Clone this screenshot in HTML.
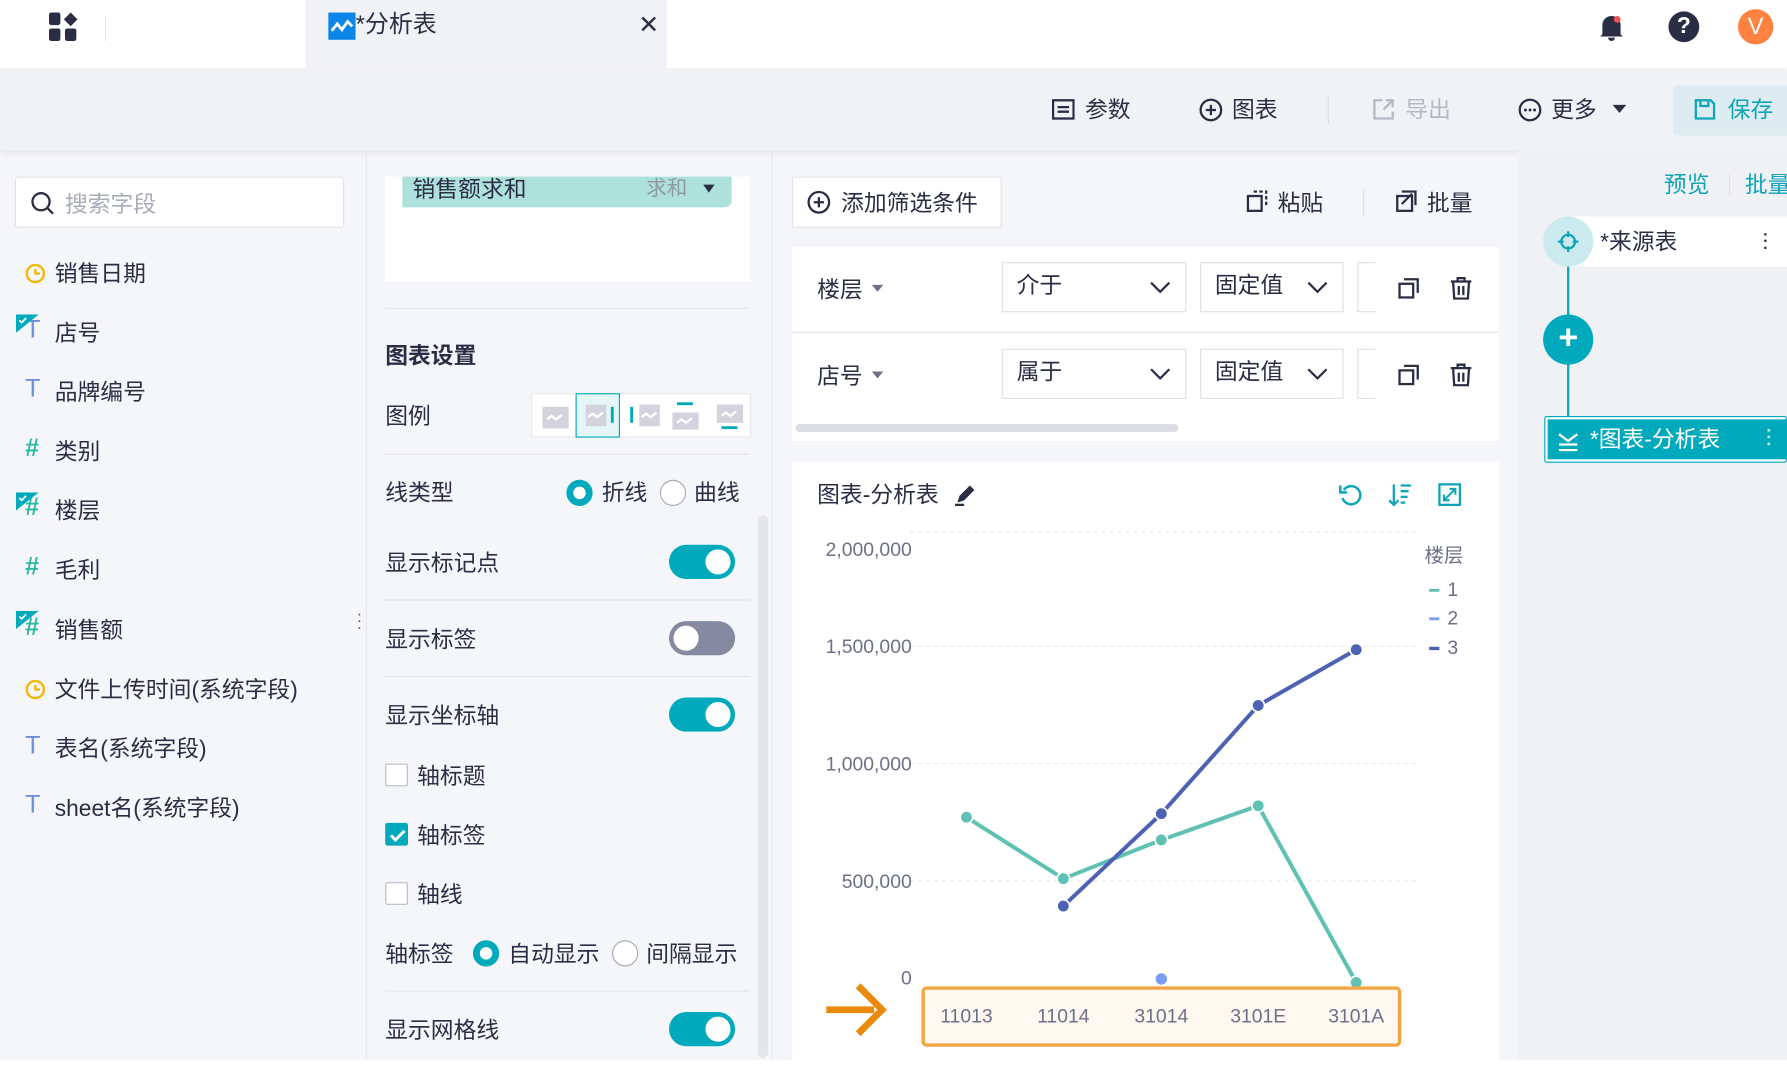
<!DOCTYPE html>
<html><head><meta charset="utf-8"><style>
html,body{margin:0;padding:0;width:1787px;height:1080px;overflow:hidden;background:#f3f4f7}
#w{position:absolute;left:0;top:0;width:1568px;height:948px;transform:scale(1.13967);transform-origin:0 0;font-family:"Liberation Sans","Noto Sans CJK SC",sans-serif;color:#2a2e45;background:#f5f6f9}
.a{position:absolute}
.t{font-size:20px;white-space:nowrap;margin-top:-3px}
.sw{position:absolute;width:58px;height:30px;border-radius:15px;background:#00a9bc}
.sw::after{content:"";position:absolute;right:4px;top:4px;width:22px;height:22px;border-radius:50%;background:#fff}
.sw.off{background:#858aa0}.sw.off::after{left:4px;right:auto}
.cb{position:absolute;width:18px;height:18px;border:1.5px solid #b8bccb;border-radius:2px;background:#fff}
.rd{position:absolute;width:20px;height:20px;border-radius:50%;border:1.5px solid #a5a9b8;background:#fff;box-sizing:border-box}
.rd.on{border:6px solid #00a9bc}
.hr{position:absolute;height:1px;background:#e2e4ea}
.sel{position:absolute;height:44px;background:#fff;border:1px solid #dfe1e7;box-sizing:border-box;font-size:20px;line-height:40px;padding-left:12px}
</style></head><body><div id="w">
<!-- top bar -->
<div class="a" style="left:0;top:0;width:1568px;height:60px;background:#fff"></div>
<svg class="a" style="left:43px;top:11px" width="26" height="26"><rect x="0" y="0" width="10" height="11" rx="2" fill="#2a2e45"/><path d="M19 0l6 6-6 6-6-6z" fill="#2a2e45"/><rect x="0" y="14" width="10" height="11" rx="2" fill="#2a2e45"/><rect x="14" y="14" width="10" height="11" rx="2" fill="#2a2e45"/></svg>
<div class="a" style="left:92px;top:14px;width:1px;height:22px;background:#e3e5ea"></div>
<div class="a" style="left:268px;top:0;width:317px;height:60px;background:#f1f2f6"></div>
<svg class="a" style="left:288px;top:11px" width="24" height="24"><rect width="24" height="24" fill="#0a86e8"/><path d="M3 16l5-6 4 5 5-7 4 4" stroke="#fff" stroke-width="2.5" fill="none"/></svg>
<div class="a t" style="left:312px;top:8px;font-size:21px">*分析表</div>
<div class="a t" style="left:560px;top:12px;font-size:22px">✕</div>
<svg class="a" style="left:1401px;top:11px" width="26" height="26"><path d="M5 19V11a8 8 0 0116 0v8l2 2H3z M10 22h6a3 3 0 01-6 0" fill="#2a2e45"/><circle cx="18" cy="6" r="3" fill="#f05050"/></svg>
<div class="a" style="left:1464px;top:10px;width:27px;height:27px;border-radius:50%;background:#2a2e45;color:#fff;font-weight:bold;text-align:center;line-height:27px;font-size:20px">?</div>
<div class="a" style="left:1525px;top:8px;width:31px;height:31px;border-radius:50%;background:#ff8240;color:#fff;text-align:center;line-height:31px;font-size:21px">V</div>
<!-- toolbar -->
<div class="a" style="left:0;top:60px;width:1568px;height:72px;background:#f1f2f5;box-shadow:0 3px 6px rgba(0,0,0,.06)"></div>
<svg class="a" style="left:923px;top:86px" width="20" height="20"><rect x="1" y="2" width="18" height="16" fill="none" stroke="#2a2e45" stroke-width="2"/><path d="M5 8h10M5 12h10" stroke="#2a2e45" stroke-width="2"/></svg>
<div class="a t" style="left:952px;top:83px">参数</div>
<svg class="a" style="left:1052px;top:86px" width="21" height="21"><circle cx="10.5" cy="10.5" r="9" fill="none" stroke="#2a2e45" stroke-width="2"/><path d="M10.5 6v9M6 10.5h9" stroke="#2a2e45" stroke-width="2"/></svg>
<div class="a t" style="left:1081px;top:83px">图表</div>
<div class="a" style="left:1165px;top:84px;width:1px;height:24px;background:#dcdee4"></div>
<svg class="a" style="left:1204px;top:86px" width="20" height="20"><path d="M9 2H2v16h16v-6M10 10l8-8M12 2h6v6" stroke="#b5b9c6" stroke-width="2" fill="none"/></svg>
<div class="a t" style="left:1233px;top:83px;color:#b5b9c6">导出</div>
<svg class="a" style="left:1332px;top:86px" width="21" height="21"><circle cx="10.5" cy="10.5" r="9" fill="none" stroke="#2a2e45" stroke-width="2"/><circle cx="6.5" cy="10.5" r="1.3" fill="#2a2e45"/><circle cx="10.5" cy="10.5" r="1.3" fill="#2a2e45"/><circle cx="14.5" cy="10.5" r="1.3" fill="#2a2e45"/></svg>
<div class="a t" style="left:1361px;top:83px">更多</div>
<div class="a" style="left:1415px;top:92px;border:6px solid transparent;border-top:7px solid #2a2e45"></div>
<div class="a" style="left:1468px;top:75px;width:110px;height:44px;background:#dcecf1;border-radius:4px"></div>
<svg class="a" style="left:1486px;top:86px" width="20" height="20"><path d="M2 2h13l3 3v13H2z M6 2v5h7V2" stroke="#0fa5b9" stroke-width="2" fill="none"/></svg>
<div class="a t" style="left:1516px;top:83px;color:#0fa5b9">保存</div>
<!-- left panel -->
<div class="a" style="left:13px;top:155px;width:289px;height:45px;background:#fff;border:1px solid #e0e2e8;border-radius:3px;box-sizing:border-box"></div>
<svg class="a" style="left:27px;top:168px" width="21" height="21"><circle cx="9" cy="9" r="7.5" fill="none" stroke="#2a2e45" stroke-width="2"/><path d="M14.5 14.5l5 5" stroke="#2a2e45" stroke-width="2"/></svg>
<div class="a t" style="left:57px;top:166px;color:#a8acba">搜索字段</div>
<div class="a" style="left:321px;top:132px;width:1px;height:816px;background:#e5e7ec"></div>
<svg class="a" style="left:22px;top:231px" width="18" height="18"><circle cx="9" cy="9" r="7.5" fill="none" stroke="#f7b500" stroke-width="2"/><path d="M9 5v4h4" stroke="#f7b500" stroke-width="2" fill="none"/></svg>
<div class="a t" style="left:48px;top:227px">销售日期</div>
<div class="a t" style="left:22px;top:279px;color:#6e8fe0;font-size:22px">T</div><div class="a t" style="left:48px;top:279px">店号</div>
<div class="a t" style="left:22px;top:331px;color:#6e8fe0;font-size:22px">T</div><div class="a t" style="left:48px;top:331px">品牌编号</div>
<div class="a t" style="left:22px;top:383px;color:#2cb8a0;font-size:22px;font-weight:bold">#</div><div class="a t" style="left:48px;top:383px">类别</div>
<div class="a t" style="left:22px;top:435px;color:#2cb8a0;font-size:22px;font-weight:bold">#</div><div class="a t" style="left:48px;top:435px">楼层</div>
<div class="a t" style="left:22px;top:487px;color:#2cb8a0;font-size:22px;font-weight:bold">#</div><div class="a t" style="left:48px;top:487px">毛利</div>
<div class="a t" style="left:22px;top:540px;color:#2cb8a0;font-size:22px;font-weight:bold">#</div><div class="a t" style="left:48px;top:540px">销售额</div>
<svg class="a" style="left:14px;top:276px" width="20" height="16"><path d="M0 0h20L0 16z" fill="#00a9bc"/><path d="M3 5l2 2 4-4" stroke="#fff" stroke-width="1.5" fill="none"/></svg>
<svg class="a" style="left:14px;top:432px" width="20" height="16"><path d="M0 0h20L0 16z" fill="#00a9bc"/><path d="M3 5l2 2 4-4" stroke="#fff" stroke-width="1.5" fill="none"/></svg>
<svg class="a" style="left:14px;top:536px" width="20" height="16"><path d="M0 0h20L0 16z" fill="#00a9bc"/><path d="M3 5l2 2 4-4" stroke="#fff" stroke-width="1.5" fill="none"/></svg>
<div class="a" style="left:313px;top:535px;font-size:14px;line-height:6px;color:#555">·<br>·<br>·</div>
<svg class="a" style="left:22px;top:596px" width="18" height="18"><circle cx="9" cy="9" r="7.5" fill="none" stroke="#f7b500" stroke-width="2"/><path d="M9 5v4h4" stroke="#f7b500" stroke-width="2" fill="none"/></svg>
<div class="a t" style="left:48px;top:592px">文件上传时间(系统字段)</div>
<div class="a t" style="left:22px;top:644px;color:#6e8fe0;font-size:22px">T</div><div class="a t" style="left:48px;top:644px">表名(系统字段)</div>
<div class="a t" style="left:22px;top:696px;color:#6e8fe0;font-size:22px">T</div><div class="a t" style="left:48px;top:696px">sheet名(系统字段)</div>
<!-- middle panel -->
<div class="a" style="left:338px;top:155px;width:320px;height:92px;background:#fff"></div>
<div class="a" style="left:353px;top:155px;width:289px;height:27px;background:#afe1dc;border-radius:0 0 6px 0"></div>
<div class="a t" style="left:362px;top:153px">销售额求和</div>
<div class="a t" style="left:567px;top:154px;color:#8f98a5;font-size:18px">求和</div>
<div class="a" style="left:617px;top:162px;border:5px solid transparent;border-top:7px solid #2a2e45"></div>
<div class="hr" style="left:338px;top:270px;width:320px"></div>
<div class="a t" style="left:338px;top:299px;font-weight:bold">图表设置</div>
<div class="a t" style="left:338px;top:352px">图例</div>
<div class="a" style="left:466px;top:345px;width:193px;height:39px;background:#fff;border:1px solid #e5e7ec;box-sizing:border-box"></div>
<div class="a" style="left:505px;top:345px;width:39px;height:39px;background:#e5f6f8;border:1px solid #00a9bc;box-sizing:border-box"></div>
<svg class="a" style="left:466px;top:345px" width="193" height="39"><g fill="#d2d3dc"><rect x="10" y="12" width="23" height="19"/><rect x="48" y="10" width="18" height="19"/><rect x="95" y="10" width="18" height="19"/><rect x="124" y="17" width="23" height="15"/><rect x="163" y="10" width="23" height="16"/></g><g fill="#00a9bc"><rect x="70" y="12" width="2.5" height="14"/><rect x="87" y="12" width="2.5" height="14"/><rect x="128" y="8" width="14" height="2.5"/><rect x="167" y="29" width="14" height="2.5"/></g><g stroke="#fff" stroke-width="2" fill="none"><path d="M14 23l4-3 4 3 5-4"/><path d="M50 21l4-3 4 3 5-4"/><path d="M97 21l4-3 4 3 5-4"/><path d="M128 26l4-3 4 3 5-4"/><path d="M167 20l4-3 4 3 5-4"/></g></svg>
<div class="hr" style="left:338px;top:398px;width:320px"></div>
<div class="a t" style="left:338px;top:419px">线类型</div>
<div class="rd on" style="left:497px;top:421px;width:23px;height:23px"></div>
<div class="a t" style="left:528px;top:419px">折线</div>
<div class="rd" style="left:579px;top:421px;width:23px;height:23px"></div>
<div class="a t" style="left:609px;top:419px">曲线</div>
<div class="a" style="left:665px;top:452px;width:9px;height:476px;background:#e5e6ea;border-radius:5px"></div>
<div class="a t" style="left:338px;top:481px">显示标记点</div><div class="sw" style="left:587px;top:478px"></div>
<div class="hr" style="left:338px;top:526px;width:320px"></div>
<div class="a t" style="left:338px;top:548px">显示标签</div><div class="sw off" style="left:587px;top:545px"></div>
<div class="hr" style="left:338px;top:593px;width:320px"></div>
<div class="a t" style="left:338px;top:615px">显示坐标轴</div><div class="sw" style="left:587px;top:612px"></div>
<div class="cb" style="left:338px;top:670px"></div><div class="a t" style="left:366px;top:668px">轴标题</div>
<div class="cb" style="left:338px;top:722px;background:#00a9bc;border-color:#00a9bc"></div>
<svg class="a" style="left:340px;top:724px" width="18" height="18"><path d="M3 9l4 4 8-8" stroke="#fff" stroke-width="2.5" fill="none"/></svg>
<div class="a t" style="left:366px;top:720px">轴标签</div>
<div class="cb" style="left:338px;top:774px"></div><div class="a t" style="left:366px;top:772px">轴线</div>
<div class="a t" style="left:338px;top:824px">轴标签</div>
<div class="rd on" style="left:415px;top:825px;width:23px;height:23px"></div>
<div class="a t" style="left:446px;top:824px">自动显示</div>
<div class="rd" style="left:537px;top:825px;width:23px;height:23px"></div>
<div class="a t" style="left:567px;top:824px">间隔显示</div>
<div class="hr" style="left:338px;top:869px;width:320px"></div>
<div class="a t" style="left:338px;top:891px">显示网格线</div><div class="sw" style="left:587px;top:888px"></div>
<div class="a" style="left:677px;top:132px;width:1px;height:816px;background:#e5e7ec"></div>
<!-- filter area -->
<div class="a" style="left:695px;top:155px;width:184px;height:45px;background:#fff;border:1px solid #e0e2e8;box-sizing:border-box"></div>
<svg class="a" style="left:708px;top:167px" width="21" height="21"><circle cx="10.5" cy="10.5" r="9" fill="none" stroke="#2a2e45" stroke-width="2"/><path d="M10.5 6v9M6 10.5h9" stroke="#2a2e45" stroke-width="2"/></svg>
<div class="a t" style="left:738px;top:165px">添加筛选条件</div>
<svg class="a" style="left:1093px;top:167px" width="20" height="20"><rect x="2" y="5" width="12" height="13" fill="none" stroke="#2a2e45" stroke-width="2"/><path d="M7 1h11v12" stroke="#2a2e45" stroke-width="2" fill="none" stroke-dasharray="3 2"/></svg>
<div class="a t" style="left:1121px;top:165px">粘贴</div>
<div class="a" style="left:1196px;top:166px;width:1px;height:24px;background:#dcdee4"></div>
<svg class="a" style="left:1224px;top:167px" width="20" height="20"><rect x="2" y="5" width="13" height="13" fill="none" stroke="#2a2e45" stroke-width="2"/><path d="M6 1h12v12M6 12l9-9" stroke="#2a2e45" stroke-width="2" fill="none"/></svg>
<div class="a t" style="left:1252px;top:165px">批量</div>
<div class="a" style="left:695px;top:217px;width:620px;height:170px;background:#fff"></div>
<div class="hr" style="left:695px;top:291px;width:620px"></div>
<div class="a t" style="left:717px;top:241px">楼层</div><div class="a" style="left:765px;top:250px;border:5px solid transparent;border-top:6px solid #6c7088"></div>
<div class="a t" style="left:717px;top:317px">店号</div><div class="a" style="left:765px;top:326px;border:5px solid transparent;border-top:6px solid #6c7088"></div>
<div class="sel" style="left:879px;top:230px;width:162px">介于</div>
<div class="sel" style="left:1053px;top:230px;width:126px">固定值</div>
<div class="sel" style="left:1191px;top:230px;width:16px;border-right:none"></div>
<div class="sel" style="left:879px;top:306px;width:162px">属于</div>
<div class="sel" style="left:1053px;top:306px;width:126px">固定值</div>
<div class="sel" style="left:1191px;top:306px;width:16px;border-right:none"></div>
<svg class="a" style="left:1008px;top:245px" width="20" height="14"><path d="M2 3l8 8 8-8" stroke="#2a2e45" stroke-width="2" fill="none"/></svg>
<svg class="a" style="left:1146px;top:245px" width="20" height="14"><path d="M2 3l8 8 8-8" stroke="#2a2e45" stroke-width="2" fill="none"/></svg>
<svg class="a" style="left:1008px;top:321px" width="20" height="14"><path d="M2 3l8 8 8-8" stroke="#2a2e45" stroke-width="2" fill="none"/></svg>
<svg class="a" style="left:1146px;top:321px" width="20" height="14"><path d="M2 3l8 8 8-8" stroke="#2a2e45" stroke-width="2" fill="none"/></svg>
<svg class="a" style="left:1226px;top:243px" width="20" height="20"><rect x="2" y="6" width="12" height="12" fill="none" stroke="#2a2e45" stroke-width="2"/><path d="M6 2h12v12" stroke="#2a2e45" stroke-width="2" fill="none"/></svg>
<svg class="a" style="left:1272px;top:243px" width="20" height="20"><path d="M1 4h18M7 4V1h6v3M3 4l1 15h12l1-15M8 8v8M12 8v8" stroke="#2a2e45" stroke-width="2" fill="none"/></svg>
<svg class="a" style="left:1226px;top:319px" width="20" height="20"><rect x="2" y="6" width="12" height="12" fill="none" stroke="#2a2e45" stroke-width="2"/><path d="M6 2h12v12" stroke="#2a2e45" stroke-width="2" fill="none"/></svg>
<svg class="a" style="left:1272px;top:319px" width="20" height="20"><path d="M1 4h18M7 4V1h6v3M3 4l1 15h12l1-15M8 8v8M12 8v8" stroke="#2a2e45" stroke-width="2" fill="none"/></svg>
<div class="a" style="left:698px;top:372px;width:336px;height:7px;background:#dcdde2;border-radius:4px"></div>
<!-- chart -->
<div class="a" style="left:695px;top:405px;width:620px;height:543px;background:#fff"></div>
<div class="a t" style="left:717px;top:421px">图表-分析表</div>
<svg class="a" style="left:837px;top:424px" width="20" height="20"><path d="M3 17l2-6 9-9 4 4-9 9z" fill="#2a2e45"/><path d="M1 19h8" stroke="#2a2e45" stroke-width="2"/></svg>
<svg class="a" style="left:1174px;top:423px" width="22" height="22"><path d="M5 7a8 8 0 1 1-1 7" stroke="#0fa5b9" stroke-width="2.2" fill="none"/><path d="M2 3v6h6" stroke="#0fa5b9" stroke-width="2.2" fill="none"/></svg>
<svg class="a" style="left:1218px;top:423px" width="22" height="22"><path d="M5 2v18M1 16l4 4 4-4M11 3h9M11 8h7M11 13h6M11 18h4" stroke="#0fa5b9" stroke-width="2" fill="none"/></svg>
<svg class="a" style="left:1261px;top:423px" width="22" height="22"><rect x="2" y="2" width="18" height="18" fill="none" stroke="#0fa5b9" stroke-width="2"/><path d="M7 15l8-8M11 6h5v5M6 11v5h5" stroke="#0fa5b9" stroke-width="1.8" fill="none"/></svg>
<svg class="a" style="left:695px;top:405px" width="620" height="543" font-family="Liberation Sans,sans-serif">
<g stroke="#e8e9ee" stroke-dasharray="4 3"><path d="M103 62H548M103 162H548M103 265H548M103 368H548"/></g>
<g fill="#6c7088" font-size="17" text-anchor="end"><text x="105" y="83">2,000,000</text><text x="105" y="168">1,500,000</text><text x="105" y="271">1,000,000</text><text x="105" y="374">500,000</text><text x="105" y="459">0</text></g>
<text x="555" y="88" fill="#6c7088" font-size="17">楼层</text>
<g font-size="17" fill="#6c7088"><text x="575" y="118">1</text><text x="575" y="143">2</text><text x="575" y="169">3</text></g>
<path d="M559 113h9" stroke="#5fc0b4" stroke-width="2.5"/><path d="M559 138h9" stroke="#7b9cf0" stroke-width="2.5"/><path d="M559 164h9" stroke="#4e62b5" stroke-width="3"/>
<polyline points="153,312 238,366 324,332 409,302 495,457" fill="none" stroke="#5fc0b4" stroke-width="3.5"/>
<polyline points="238,390 324,309 409,214 495,165" fill="none" stroke="#4e62b5" stroke-width="3.5"/>
<g fill="#5fc0b4" stroke="#fff" stroke-width="1.5"><circle cx="153" cy="312" r="5.5"/><circle cx="238" cy="366" r="5.5"/><circle cx="324" cy="332" r="5.5"/><circle cx="409" cy="302" r="5.5"/><circle cx="495" cy="457" r="5.5"/></g>
<g fill="#4e62b5" stroke="#fff" stroke-width="1.5"><circle cx="238" cy="390" r="5.5"/><circle cx="324" cy="309" r="5.5"/><circle cx="409" cy="214" r="5.5"/><circle cx="495" cy="165" r="5.5"/></g>
<circle cx="324" cy="454" r="5" fill="#7b9cf0"/>
<rect x="115" y="462" width="418" height="50" rx="3" fill="#fff8f0" stroke="#f2a643" stroke-width="3"/>
<g font-size="17" fill="#6c7088" text-anchor="middle"><text x="153" y="492">11013</text><text x="238" y="492">11014</text><text x="324" y="492">31014</text><text x="409" y="492">3101E</text><text x="495" y="492">3101A</text></g>
<path d="M30 481h40M58 459l22 22-22 22" stroke="#fff" stroke-width="12" fill="none"/>
<path d="M30 481h42M58 460l21 21-21 21" stroke="#ea8a0b" stroke-width="6" fill="none"/>
</svg>
<!-- right panel -->
<div class="a" style="left:1332px;top:132px;width:236px;height:816px;background:#f0f1f5"></div>
<div class="a t" style="left:1460px;top:149px;color:#0fa5b9">预览</div>
<div class="a" style="left:1517px;top:153px;width:1px;height:18px;background:#dcdee4"></div>
<div class="a t" style="left:1531px;top:149px;color:#0fa5b9">批量</div>
<div class="a" style="left:1376px;top:190px;width:192px;height:44px;background:#fff"></div>
<div class="a" style="left:1354px;top:190px;width:44px;height:44px;border-radius:50%;background:#cbeaef"></div>
<svg class="a" style="left:1366px;top:202px" width="20" height="20"><circle cx="10" cy="10" r="6" fill="none" stroke="#0fa5b9" stroke-width="2"/><path d="M10 1v5M10 14v5M1 10h5M14 10h5" stroke="#0fa5b9" stroke-width="2"/></svg>
<div class="a t" style="left:1404px;top:199px">*来源表</div>
<div class="a" style="left:1547px;top:202px;font-size:14px;line-height:6px;font-weight:bold">·<br>·<br>·</div>
<div class="a" style="left:1375px;top:234px;width:2px;height:132px;background:#0fa5b9"></div>
<div class="a" style="left:1354px;top:276px;width:44px;height:44px;border-radius:50%;background:#00a9bc;color:#fff;font-size:30px;text-align:center;line-height:42px;font-weight:bold">+</div>
<div class="a" style="left:1355px;top:365px;width:213px;height:41px;border:1px solid #00a9bc;border-radius:2px;background:#fff;box-sizing:border-box"></div>
<div class="a" style="left:1358px;top:368px;width:210px;height:35px;background:#00a9bc"></div>
<svg class="a" style="left:1366px;top:376px" width="20" height="20"><path d="M2 5l8 6 8-6M2 19h16M2 14h16" stroke="#fff" stroke-width="2" fill="none"/></svg>
<div class="a t" style="left:1395px;top:372px;color:#fff">*图表-分析表</div>
<div class="a" style="left:1550px;top:374px;font-size:14px;line-height:6px;font-weight:bold;color:#fff">·<br>·<br>·</div>
<div class="a" style="left:0;top:930px;width:1568px;height:18px;background:#fff"></div>
</div></body></html>
